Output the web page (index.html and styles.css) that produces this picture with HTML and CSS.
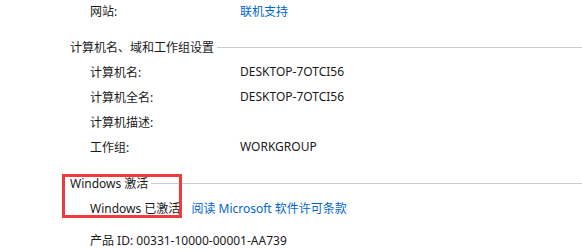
FILE: index.html
```html
<!DOCTYPE html>
<html lang="zh-CN">
<head>
    <meta charset="UTF-8">
    <title>系统</title>
    <link rel="stylesheet" href="styles.css">
</head>
<body>
    <div class="row row-first">
        <span class="label">网站:</span>
        <a class="link" href="#">联机支持</a>
    </div>

    <div class="group">
        <div class="group-title">计算机名、域和工作组设置</div>
        <div class="row">
            <span class="label">计算机名:</span>
            <span class="value">DESKTOP-7OTCI56</span>
        </div>
        <div class="row">
            <span class="label">计算机全名:</span>
            <span class="value">DESKTOP-7OTCI56</span>
        </div>
        <div class="row">
            <span class="label">计算机描述:</span>
            <span class="value"></span>
        </div>
        <div class="row">
            <span class="label">工作组:</span>
            <span class="value">WORKGROUP</span>
        </div>
    </div>

    <div class="group group-activation">
        <div class="highlight"></div>
        <div class="group-title">Windows 激活</div>
        <div class="row row-inline">
            <span>Windows 已激活</span>
            <a class="link" href="#">阅读 Microsoft 软件许可条款</a>
        </div>
        <div class="row row-inline row-product">
            <span>产品 ID: 00331-10000-00001-AA739</span>
        </div>
    </div>
</body>
</html>
```

FILE: styles.css
```css
body {
    margin: 0;
    background-color: #fff;
    color: #1a1a1a;
    font-family: "Noto Sans", "Noto Sans CJK SC", sans-serif;
    font-size: 12px;
}
.row {
    display: grid;
    grid-template-columns: 150px 1fr;
    align-items: center;
    height: 25px;
    padding-left: 90px;
}
.row-first {
    height: 22px;
}
.link {
    color: #0066cc;
    text-decoration: none;
}
.group {
    position: relative;
    margin-top: 12px;
}
.group-title {
    display: flex;
    align-items: center;
    gap: 3px;
    height: 25px;
    padding-left: 70px;
}
.group-title::after {
    content: "";
    flex: 1;
    border-top: 1px solid #cccccc;
    margin-top: 2px;
}
.group-activation {
    margin-top: 11px;
}
.row-inline {
    display: flex;
    gap: 11px;
    white-space: nowrap;
}
.row-product {
    margin-top: 7px;
}
/* red marker drawn over the activation block */
.highlight {
    position: absolute;
    left: 62px;
    top: 4px;
    width: 114px;
    height: 38px;
    border: 3px solid #ee3b3b;
}
```
